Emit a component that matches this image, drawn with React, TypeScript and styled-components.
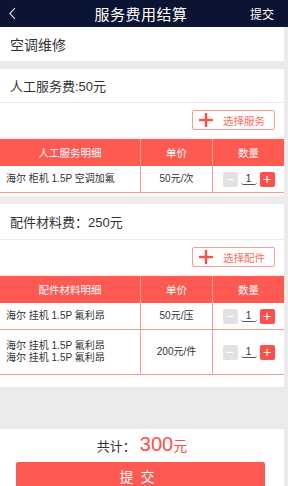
import React from "react";
import styled, { createGlobalStyle } from "styled-components";

const GlobalStyle = createGlobalStyle`
  html, body {
    margin: 0;
    padding: 0;
    background: #ebebeb;
    font-family: "Liberation Sans", "Noto Sans CJK SC", sans-serif;
    color: #333;
  }
`;

const Page = styled.div`
  width: 288px;
  height: 486px;
  overflow: hidden;
  background: #ebebeb;
`;

const Header = styled.div`
  height: 27px;
  background: #0c1434;
  color: #fff;
  display: flex;
  align-items: center;
  justify-content: space-between;
  padding: 0 14px 0 8px;
`;

const Back = styled.div`
  width: 24px;
  display: flex;
  align-items: center;
`;

const Title = styled.div`
  font-size: 15px;
  letter-spacing: 0.5px;
`;

const HeaderAction = styled.div`
  font-size: 12px;
  width: 24px;
  text-align: right;
`;

const Body = styled.div`
  width: 284px;
`;

const Panel = styled.div<{ gap?: number }>`
  background: #fff;
  margin-top: ${(p) => p.gap ?? 0}px;
`;

const Line = styled.div<{ h: number; size?: number; plain?: boolean }>`
  height: ${(p) => p.h}px;
  display: flex;
  align-items: center;
  padding-left: 10px;
  font-size: ${(p) => p.size ?? 13}px;
  color: #333;
  border-bottom: ${(p) => (p.plain ? "none" : "1px solid #ececec")};
`;

const ActionRow = styled.div`
  height: 34px;
  display: flex;
  align-items: center;
  justify-content: flex-end;
  padding-right: 9px;
  border-bottom: 2px solid #fff0f0;
`;

const SelectButton = styled.div`
  width: 75px;
  height: 18px;
  border: 1px solid #ff9a94;
  border-radius: 2px;
  display: flex;
  align-items: center;
  font-size: 10.5px;
  color: #ff6a60;
  gap: 10px;
  padding-left: 6px;
  box-sizing: content-box;
`;

const Table = styled.div`
  display: grid;
  grid-template-columns: 140px 72px 72px;
`;

const HeadCell = styled.div`
  background: #ff5a52;
  color: #fff;
  font-size: 10.5px;
  height: 27px;
  display: flex;
  align-items: center;
  justify-content: center;
  border-left: 1px solid #ffa19c;
  &:first-child {
    border-left: none;
  }
`;

const Cell = styled.div<{ h: number; first?: boolean }>`
  height: ${(p) => p.h}px;
  display: flex;
  flex-direction: column;
  justify-content: center;
  align-items: ${(p) => (p.first ? "flex-start" : "center")};
  padding-left: ${(p) => (p.first ? 6 : 0)}px;
  font-size: 10px;
  color: #333;
  line-height: 12px;
  border-bottom: 1.5px solid #ff9690;
  border-left: ${(p) => (p.first ? "none" : "1.5px solid #ff9690")};
  box-sizing: border-box;
`;

const Stepper = styled.div`
  display: flex;
  align-items: center;
  gap: 3px;
`;

const StepBtn = styled.div<{ active?: boolean }>`
  width: 15px;
  height: 15px;
  border-radius: 2px;
  background: ${(p) => (p.active ? "#ff4f48" : "#e2e2e2")};
  color: #fff;
  display: flex;
  align-items: center;
  justify-content: center;
  font-size: 14px;
  line-height: 1;
`;

const Qty = styled.div`
  width: 16px;
  text-align: center;
  font-size: 10px;
  border-bottom: 1px solid #555;
  border-radius: 0 0 3px 3px;
  line-height: 11px;
`;

const Spacer = styled.div<{ h: number }>`
  height: ${(p) => p.h}px;
  background: #fff;
`;

const Footer = styled.div`
  background: #fff;
  margin-top: 42px;
  padding-top: 4px;
  display: flex;
  flex-direction: column;
  align-items: center;
`;

const Total = styled.div`
  font-size: 13px;
  color: #333;
  display: flex;
  align-items: baseline;
  height: 27px;
`;

const Amount = styled.span`
  color: #ff4f48;
  font-size: 20px;
  margin-left: 4px;
`;

const Yuan = styled.span`
  color: #ff4f48;
  font-size: 14px;
`;

const SubmitButton = styled.div`
  width: 249px;
  height: 28px;
  background: #ff5a52;
  color: #fff;
  font-size: 14px;
  letter-spacing: 7px;
  border-radius: 2px 2px 0 0;
  display: flex;
  align-items: center;
  justify-content: center;
  margin-top: 2px;
  align-self: flex-start;
  margin-left: 16px;
`;

const Chevron = () => (
  <svg width="9" height="13" viewBox="0 0 9 13">
    <path d="M7 1 L2 6.5 L7 12" fill="none" stroke="#fff" strokeWidth="1.1" />
  </svg>
);

const Plus = () => (
  <svg width="14" height="14" viewBox="0 0 14 14">
    <rect x="0" y="5.8" width="14" height="2.4" fill="#ff4f48" />
    <rect x="5.8" y="0" width="2.4" height="14" fill="#ff4f48" />
  </svg>
);

type Row = { name: string[]; price: string; h: number };

const ItemTable = ({ title, rows }: { title: string; rows: Row[] }) => (
  <Table>
    <HeadCell>{title}</HeadCell>
    <HeadCell>单价</HeadCell>
    <HeadCell>数量</HeadCell>
    {rows.map((r, i) => (
      <React.Fragment key={i}>
        <Cell h={r.h} first>
          {r.name.map((n, j) => (
            <div key={j}>{n}</div>
          ))}
        </Cell>
        <Cell h={r.h}>{r.price}</Cell>
        <Cell h={r.h}>
          <Stepper>
            <StepBtn>−</StepBtn>
            <Qty>1</Qty>
            <StepBtn active>+</StepBtn>
          </Stepper>
        </Cell>
      </React.Fragment>
    ))}
  </Table>
);

export default function App() {
  return (
    <Page>
      <GlobalStyle />
      <Header>
        <Back>
          <Chevron />
        </Back>
        <Title>服务费用结算</Title>
        <HeaderAction>提交</HeaderAction>
      </Header>
      <Body>
        <Panel>
          <Line h={34} size={14} plain>
            空调维修
          </Line>
        </Panel>
        <Panel gap={8}>
          <Line h={33}>人工服务费:50元</Line>
          <ActionRow>
            <SelectButton>
              <Plus />
              选择服务
            </SelectButton>
          </ActionRow>
          <ItemTable
            title="人工服务明细"
            rows={[{ name: ["海尔 柜机 1.5P 空调加氟"], price: "50元/次", h: 27 }]}
          />
          <Spacer h={3} />
        </Panel>
        <Panel gap={8}>
          <Line h={35}>配件材料费：250元</Line>
          <ActionRow>
            <SelectButton>
              <Plus />
              选择配件
            </SelectButton>
          </ActionRow>
          <ItemTable
            title="配件材料明细"
            rows={[
              { name: ["海尔 挂机 1.5P 氟利昂"], price: "50元/压", h: 27 },
              { name: ["海尔 挂机 1.5P 氟利昂", "海尔 挂机 1.5P 氟利昂"], price: "200元/件", h: 45 },
            ]}
          />
          <Spacer h={12} />
        </Panel>
        <Footer>
          <Total>
            共计：<Amount>300</Amount>
            <Yuan>元</Yuan>
          </Total>
          <SubmitButton>提交</SubmitButton>
        </Footer>
      </Body>
    </Page>
  );
}
